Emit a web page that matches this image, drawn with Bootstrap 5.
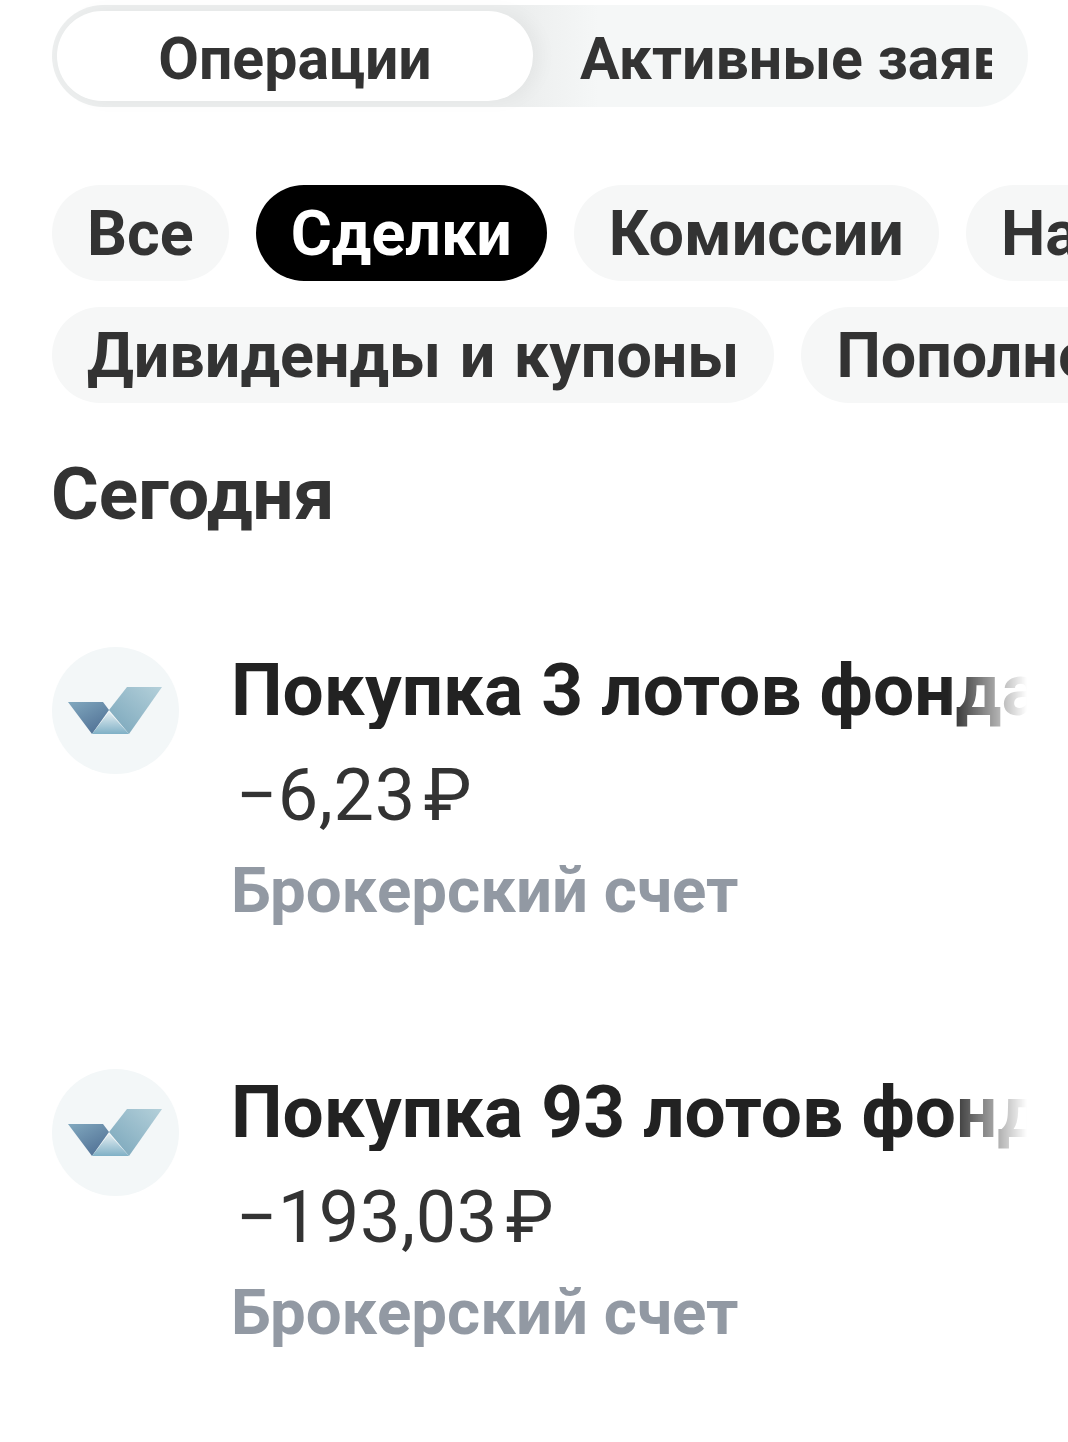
<!DOCTYPE html>
<html lang="ru">
<head>
  <meta charset="UTF-8">
  <title>Операции</title>
  <link href="https://cdn.jsdelivr.net/npm/bootstrap@5.3.3/dist/css/bootstrap.min.css" rel="stylesheet">
  <style>
    body { background: #fff; font-family: Roboto, "Liberation Sans", sans-serif; overflow: hidden; color: #333; }
    .page-wrap { width: 1068px; height: 1442px; overflow: hidden; padding: 5px 0 0 52px; }

    .tab-track { width: 976px; height: 102px; border-radius: 51px; padding: 6px 5px;
                 background: linear-gradient(90deg, #eceeee 0%, #eceeee 48%, #f5f7f7 56%, #f5f7f7 100%); }
    .tab-active { width: 476px; height: 90px; border-radius: 45px; background: #fff; flex: none; padding-top: 6px;
                  font-size: 59px; font-weight: 700; box-shadow: 8px 0 18px rgba(0,0,0,.04); }
    .tab-other { width: 412px; margin-left: 47px; padding-top: 6px; font-size: 59px; font-weight: 700; white-space: nowrap; overflow: hidden; }

    .chip-row { gap: 27px; height: 96px; white-space: nowrap; }
    .chip { flex: none; height: 96px; border-radius: 48px; background: #f6f7f7; padding: 2px 35px 0;
            font-size: 62.8px; font-weight: 700; word-spacing: 3px; }
    .chip-on { background: #000; color: #fff; }
    .day-title { font-size: 73px; font-weight: 700; line-height: 75px; color: #333; margin: 54px 0 0 -1px; }

    .op-row { height: 422px; gap: 53px; }
    .op-logo { width: 127px; height: 127px; flex: none; }
    .op-text { width: 796px; margin-left: -1px; }
    .op-title { font-size: 73px; font-weight: 700; line-height: 78px; color: #222; white-space: nowrap; overflow: hidden;
                margin-top: 4px;
                -webkit-mask-image: linear-gradient(90deg, #000 90%, transparent 100%);
                mask-image: linear-gradient(90deg, #000 90%, transparent 100%); }
    .op-sum { font-size: 72px; font-weight: 400; line-height: 78px; margin-top: 28px; color: #333; padding-left: 5px; letter-spacing: .6px; }
    .op-acc { font-size: 63.6px; font-weight: 700; line-height: 66px; margin-top: 23px; color: #9299a3; }
    .op-list { margin-top: 115px; }
  </style>
</head>
<body>
<div class="page-wrap">
  <!-- вкладки -->
  <div class="tab-track d-flex align-items-center">
    <div class="tab-active d-flex align-items-center justify-content-center">Операции</div>
    <div class="tab-other">Активные заявки</div>
  </div>

  <!-- фильтры -->
  <div class="chip-row d-flex" style="margin-top:78px">
    <div class="chip d-flex align-items-center">Все</div>
    <div class="chip chip-on d-flex align-items-center">Сделки</div>
    <div class="chip d-flex align-items-center">Комиссии</div>
    <div class="chip d-flex align-items-center">Налоги</div>
  </div>
  <div class="chip-row d-flex" style="margin-top:26px">
    <div class="chip d-flex align-items-center">Дивиденды и купоны</div>
    <div class="chip d-flex align-items-center">Пополнения</div>
  </div>

  <h2 class="day-title">Сегодня</h2>

  <!-- список операций -->
  <div class="op-list">
    <div class="op-row d-flex align-items-start">
      <svg class="op-logo" viewBox="0 0 127 127">
        <defs>
          <linearGradient id="gl" x1="0.1" y1="0" x2="0.8" y2="1"><stop offset="0" stop-color="#7fa6bd"/><stop offset="1" stop-color="#4f6f94"/></linearGradient>
          <linearGradient id="gr" x1="1" y1="0" x2="0" y2="1"><stop offset="0" stop-color="#b4d0da"/><stop offset="1" stop-color="#78a5ba"/></linearGradient>
          <linearGradient id="gm" x1="0" y1="0" x2="0" y2="1"><stop offset="0" stop-color="#e4eef2"/><stop offset="1" stop-color="#7fb0c6"/></linearGradient>
        </defs>
        <circle cx="63.5" cy="63.5" r="63.5" fill="#f3f7f8"/>
        <polygon points="16,55 51,55 57,63 40,87" fill="url(#gl)"/>
        <polygon points="75,40 110,40 77,87 57,63" fill="url(#gr)"/>
        <polygon points="57,65 40,87 77,87" fill="url(#gm)"/>
      </svg>
      <div class="op-text">
        <div class="op-title">Покупка 3 лотов фонда Т-Капитал</div>
        <div class="op-sum">−6,23&#8202;₽</div>
        <div class="op-acc">Брокерский счет</div>
      </div>
    </div>
    <div class="op-row d-flex align-items-start">
      <svg class="op-logo" viewBox="0 0 127 127">
        <circle cx="63.5" cy="63.5" r="63.5" fill="#f3f7f8"/>
        <polygon points="16,55 51,55 57,63 40,87" fill="url(#gl)"/>
        <polygon points="75,40 110,40 77,87 57,63" fill="url(#gr)"/>
        <polygon points="57,65 40,87 77,87" fill="url(#gm)"/>
      </svg>
      <div class="op-text">
        <div class="op-title">Покупка 93 лотов фонда Т-Капитал</div>
        <div class="op-sum">−193,03&#8202;₽</div>
        <div class="op-acc">Брокерский счет</div>
      </div>
    </div>
  </div>
</div>
<script src="https://cdn.jsdelivr.net/npm/bootstrap@5.3.3/dist/js/bootstrap.bundle.min.js"></script>
</body>
</html>
